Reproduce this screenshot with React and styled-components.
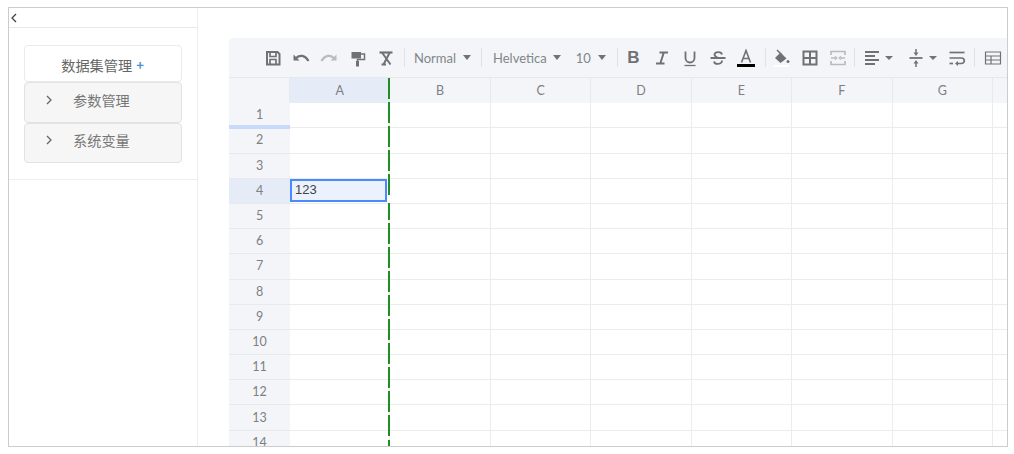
import React from "react";
import styled, { createGlobalStyle } from "styled-components";

const Global = createGlobalStyle`
    html, body {
        margin: 0;
        padding: 0;
        background: #fff;
    }
    body {
        font-family: "Lato", "Noto Sans CJK SC", sans-serif;
    }
`

const Page = styled.div`
    padding: 7px 0 0 8px;
`

const Frame = styled.div`
    width: 1000px;
    height: 440px;
    box-sizing: border-box;
    border: 1px solid #ccc;
    display: flex;
    overflow: hidden;
`

const Sidebar = styled.div`
    width: 189px;
    box-sizing: border-box;
    flex: none;
    border-right: 1px solid #eee;
`

const CollapseBar = styled.div`
    height: 19px;
    border-bottom: 1px solid #e8e8e8;
    display: flex;
    align-items: center;
    padding-left: 1px;
    color: #555;
`

const Accordion = styled.div`
    padding: 17px 15px 16px;
    border-bottom: 1px solid #eee;
`

const TopItem = styled.div`
    height: 37px;
    box-sizing: border-box;
    border: 1px solid #eaeaea;
    border-radius: 4px;
    background: #fff;
    display: flex;
    align-items: center;
    justify-content: center;
    gap: 4px;
    padding: 2px 1px 0 0;
    font-family: "Noto Sans CJK SC", sans-serif;
    font-size: 14.2px;
    color: #666;
`

const Plus = styled.span`
    color: #4a90d9;
    font-size: 13px;
    font-weight: 700;
`

const Item = styled.div`
    height: 40.5px;
    box-sizing: border-box;
    border: 1px solid #e2e2e2;
    border-radius: 4px;
    background: #f6f6f6;
    display: flex;
    align-items: center;
    padding: 0 0 5px 20px;
    font-family: "Noto Sans CJK SC", sans-serif;
    font-size: 14.2px;
    color: #777;
`

const ItemLabel = styled.span`
    margin-left: 20px;
`

const Main = styled.div`
    flex: 1;
    min-width: 0;
    padding: 30px 0 0 31px;
`

const Toolbar = styled.div`
    height: 39px;
    background: #f4f5f8;
    border-bottom: 1px solid #e6e8ec;
    border-radius: 4px 0 0 0;
    display: flex;
    align-items: center;
    padding-left: 30px;
    white-space: nowrap;
`

const Tool = styled.div`
    width: ${p => p.$w || 28.2}px;
    height: 24px;
    flex: none;
    display: flex;
    align-items: center;
    justify-content: center;
    gap: 4px;
    margin-left: ${p => p.$left || 0}px;
    color: ${p => (p.$off ? "#b9bcbf" : "#6f7275")};
`

const Divider = styled.div`
    width: 1px;
    height: 19px;
    flex: none;
    background: #e0e2e4;
    margin: 0 ${p => p.$r}px 0 ${p => p.$l}px;
`

const Select = styled.div`
    flex: none;
    display: flex;
    align-items: center;
    font-size: 13px;
    color: #80868b;
    margin-left: ${p => p.$left || 0}px;
`

const Caret = styled.span`
    width: 0;
    height: 0;
    flex: none;
    border-left: 4.5px solid transparent;
    border-right: 4.5px solid transparent;
    border-top: 5px solid #6f7377;
    margin-left: ${p => p.$gap ?? 0}px;
`

const SmallCaret = styled(Caret)`
    border-left-width: 4px;
    border-right-width: 4px;
    border-top-width: 4px;
`

const BoldLetter = styled.span`
    font-family: "Liberation Sans", sans-serif;
    font-size: 17px;
    font-weight: 700;
    line-height: 18px;
`

const Grid = styled.div`
    display: grid;
    grid-template-columns: 61px repeat(7, 100.45px) 20px;
    grid-auto-rows: 25.2px;
    font-size: 12.5px;
    color: #7c7f83;
    position: relative;
`

const ColHead = styled.div`
    background: ${p => (p.$active ? "#e6ecf7" : "#f4f5f8")};
    border-right: 1px solid #e8e9ec;
    display: flex;
    align-items: center;
    justify-content: center;
    box-sizing: border-box;
`

const RowHead = styled.div`
    background: ${p => (p.$active ? "#e6ecf7" : "#f4f5f8")};
    border-bottom: 1px solid #e8e9ec;
    display: flex;
    align-items: center;
    justify-content: center;
    position: relative;
    box-sizing: border-box;
    padding-bottom: 1px;
`

const Resizer = styled.div`
    position: absolute;
    left: 0;
    right: 0;
    bottom: -2px;
    height: 4px;
    background: #c9d9f8;
    z-index: 1;
`

const Cell = styled.div`
    border-right: 1px solid #ececec;
    border-bottom: 1px solid #ececec;
    box-sizing: border-box;
    position: relative;
`

const SplitLine = styled.div`
    position: absolute;
    left: 159px;
    top: 0;
    bottom: 0;
    width: 2px;
    background: repeating-linear-gradient(to bottom, #1d8f24 0, #1d8f24 21px, transparent 21px, transparent 24.1px);
    z-index: 2;
`

const Selection = styled.div`
    position: absolute;
    left: 0;
    top: 0;
    width: 97px;
    height: 23px;
    box-sizing: border-box;
    border: 2px solid #4b89ff;
    background: #ebf1fd;
    font-family: "Liberation Sans", sans-serif;
    font-size: 13px;
    color: #444;
    padding-left: 3px;
    line-height: 18px;
    z-index: 3;
    &::after {
        content: "";
        position: absolute;
        right: -7px;
        top: 14px;
        width: 5px;
        height: 8px;
        background: #fff;
    }
`

function Icon({ children, w = 18, h = 18 }) {
    return (
        <svg width={w} height={h} viewBox="0 0 18 18" fill="none" stroke="currentColor" strokeWidth="1.7">
            {children}
        </svg>
    )
}

function Chevron({ left }) {
    return (
        <svg width="8" height="10" viewBox="0 0 8 10" fill="none" stroke={left ? "#444" : "#666"} strokeWidth="1.3">
            <path d={left ? "M6 1 2 5l4 4" : "M2 1l4 4-4 4"} />
        </svg>
    )
}

const columns = ["A", "B", "C", "D", "E", "F", "G", ""]
const rows = [1, 2, 3, 4, 5, 6, 7, 8, 9, 10, 11, 12, 13, 14]

function Tools() {
    return (
        <Toolbar>
            <Tool>
                <Icon><path d="M3 3h10.500L15.500 5v10.500H3z" strokeWidth="2" /><path d="M6 3v4.500h6V3M6 15.500V10.500h6v5" /></Icon>
            </Tool>
            <Tool>
                <Icon>
                    <path d="M1.500 5.500v6h6z" fill="currentColor" stroke="none" />
                    <path d="M4 9c4-3.500 9-3 12.500 3" strokeWidth="2.200" />
                </Icon>
            </Tool>
            <Tool $off>
                <Icon>
                    <path d="M16.500 5.500v6h-6z" fill="currentColor" stroke="none" />
                    <path d="M14 9c-4-3.500-9-3-12.500 3" strokeWidth="2.200" />
                </Icon>
            </Tool>
            <Tool>
                <Icon>
                    <path d="M2.500 3h9.500v6.500H2.500z" fill="currentColor" stroke="none" />
                    <path d="M12 5h3.500v5.500h-7v2" strokeWidth="1.500" />
                    <path d="M7 12h3v5.500H7z" fill="currentColor" stroke="none" />
                </Icon>
            </Tool>
            <Tool>
                <Icon><path d="M2.500 3.500h13" strokeWidth="2.200" /><path d="M5 3.500 13.500 15.500M12.500 4 6.500 15.500M4.500 15.500h4.500" strokeWidth="2" /></Icon>
            </Tool>
            <Divider $l={4} $r={9} />
            <Select>Normal<Caret $gap={7} /></Select>
            <Divider $l={10} $r={11} />
            <Select>Helvetica<Caret $gap={6} /></Select>
            <Select $left={15}>10<Caret $gap={7} /></Select>
            <Divider $l={11} $r={1.500} />
            <Tool><BoldLetter>B</BoldLetter></Tool>
            <Tool>
                <Icon><path d="M6.500 3.500h8.500M3 14.500h8.500M10.800 3.500 7.300 14.500" strokeWidth="2" /></Icon>
            </Tool>
            <Tool>
                <Icon><path d="M4.500 2.500v6.500a4.500 4.500 0 0 0 9 0V2.500" strokeWidth="1.800" /><path d="M3.500 16.500h11" strokeWidth="1.300" /></Icon>
            </Tool>
            <Tool>
                <Icon><path d="M13 5.500C12.500 2 5.500 2.500 5.500 5.500c0 1.500 1.500 2.500 3.500 3.500M1.500 9h15M13 11.500c.5 4-7.500 4.500-8 1" strokeWidth="1.800" /></Icon>
            </Tool>
            <Tool>
                <Icon>
                    <path d="M4.500 13.500 9 1.500l4.500 12M6 9.500h6" strokeWidth="1.600" />
                    <path d="M0 16.500h18" stroke="#000" strokeWidth="3" />
                </Icon>
            </Tool>
            <Divider $l={5} $r={1} />
            <Tool>
                <Icon>
                    <path d="M5 1 9.500 5.500" strokeWidth="1.500" />
                    <path d="M8.500 3.500 14.500 9.500 8.500 14 3 9z" fill="currentColor" stroke="none" />
                    <circle cx="16" cy="12.500" r="1.500" fill="currentColor" stroke="none" />
                    <path d="M2 17h15" stroke="#fff" strokeWidth="2" />
                </Icon>
            </Tool>
            <Tool>
                <Icon><path d="M2.500 2.500h13v13h-13zM9 2.500v13M2.500 9h13" strokeWidth="2" /></Icon>
            </Tool>
            <Tool $off>
                <Icon><path d="M2 6V2.500h14V6M2 12v3.500h14V12M2 9h4M12 9h4M6 7.500 7.500 9 6 10.500M12 7.500 10.500 9l1.500 1.500" /></Icon>
            </Tool>
            <Divider $l={2.500} $r={2} />
            <Tool $w={42}>
                <Icon><path d="M2 3h14M2 7h10M2 11h14M2 15h10" strokeWidth="1.900" /></Icon>
                <SmallCaret />
            </Tool>
            <Tool $w={42} $left={2}>
                <Icon>
                    <path d="M2.500 9h13" strokeWidth="1.800" />
                    <path d="M9 0v4M9 14v4" strokeWidth="1.500" />
                    <path d="M6.500 3.500h5L9 7zM6.500 14.500h5L9 11z" fill="currentColor" stroke="none" />
                </Icon>
                <SmallCaret />
            </Tool>
            <Tool>
                <Icon>
                    <path d="M1.500 3.500h15" />
                    <path d="M1.500 9h12a2.700 2.700 0 0 1 0 5.500H9" />
                    <path d="M1.500 14.500h3.500" />
                    <path d="M10 12v5l-3-2.500z" fill="currentColor" stroke="none" />
                </Icon>
            </Tool>
            <Divider $l={3} $r={3} />
            <Tool>
                <Icon><path d="M1.500 3h15v12h-15zM1.500 7h15M1.500 11h15M7 7v8" strokeWidth="1.200" /></Icon>
            </Tool>
        </Toolbar>
    )
}

function App() {
    return (
        <Page>
            <Global />
            <Frame>
                <Sidebar>
                    <CollapseBar><Chevron left /></CollapseBar>
                    <Accordion>
                        <TopItem>数据集管理<Plus>+</Plus></TopItem>
                        <Item><Chevron /><ItemLabel>参数管理</ItemLabel></Item>
                        <Item><Chevron /><ItemLabel>系统变量</ItemLabel></Item>
                    </Accordion>
                </Sidebar>
                <Main>
                    <Tools />
                    <Grid>
                        <SplitLine />
                        <ColHead />
                        {columns.map((c, i) => (
                            <ColHead key={c || "rest"} $active={i === 0}>{c}</ColHead>
                        ))}
                        {rows.map(r => (
                            <React.Fragment key={r}>
                                <RowHead $active={r === 4}>
                                    {r}
                                    {r === 1 && <Resizer />}
                                </RowHead>
                                {columns.map((c, i) => (
                                    <Cell key={c || "rest"}>
                                        {i === 0 && r === 4 && <Selection>123</Selection>}
                                    </Cell>
                                ))}
                            </React.Fragment>
                        ))}
                    </Grid>
                </Main>
            </Frame>
        </Page>
    )
}

export default App
